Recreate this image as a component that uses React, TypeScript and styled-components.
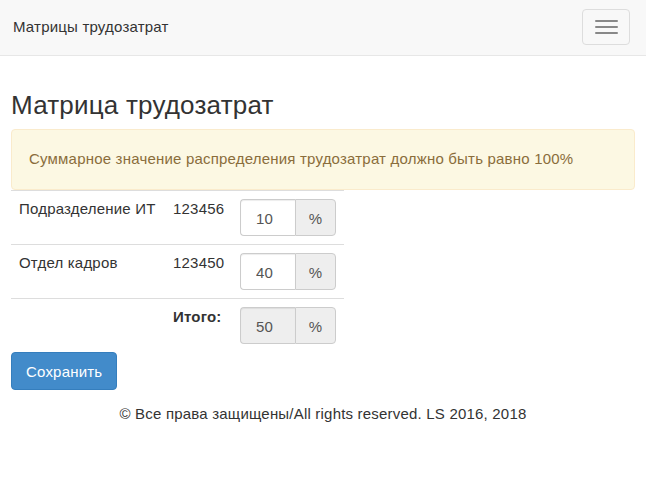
import React from "react";
import styled, { createGlobalStyle } from "styled-components";

const Global = createGlobalStyle`
  html, body { margin: 0; padding: 0; background: #fff; }
  body {
    font-family: "Liberation Sans", Arial, Helvetica, sans-serif;
    font-size: 15px;
    letter-spacing: 0.2px;
    line-height: 20px;
    color: #333;
  }
  * { box-sizing: border-box; }
`;

const Navbar = styled.nav`
  height: 56px;
  background: #f8f8f8;
  border-bottom: 1px solid #e7e7e7;
  display: flex;
  align-items: center;
  justify-content: space-between;
  padding: 0 16px 0 13px;
`;

const Brand = styled.a`
  font-size: 15px;
  color: #333;
  text-decoration: none;
  margin-top: -1px;
`;

const Toggle = styled.button`
  width: 48px;
  height: 36px;
  margin-top: -1px;
  border: 1px solid #ddd;
  border-radius: 4px;
  background: transparent;
  display: flex;
  flex-direction: column;
  align-items: center;
  justify-content: center;
  gap: 4px;
  padding: 0;
`;

const Bar = styled.span`
  display: block;
  width: 23px;
  height: 2px;
  border-radius: 1px;
  background: #888;
`;

const Container = styled.main`
  padding: 0 11px;
`;

const Title = styled.h2`
  font-size: 26px;
  letter-spacing: 0.2px;
  font-weight: 500;
  line-height: 28px;
  margin: 35px 0 10px;
  color: #333;
`;

const Alert = styled.div`
  background: #fcf8e3;
  border: 1px solid #faebcc;
  border-radius: 4px;
  color: #8a6d3b;
  padding: 19px 17px 20px;
  line-height: 20px;
`;

const Table = styled.table`
  border-collapse: collapse;
  width: 333px;
  table-layout: fixed;
`;

const Row = styled.tr``;

const Cell = styled.td<{ $w: number; $bold?: boolean }>`
  width: ${(p) => p.$w}px;
  padding: 8px;
  vertical-align: top;
  border-top: 1px solid #ddd;
  font-weight: ${(p) => (p.$bold ? 700 : 400)};
  white-space: nowrap;
`;

const InputGroup = styled.div`
  display: flex;
  width: 96px;
  height: 37px;
`;

const Input = styled.input<{ $disabled?: boolean }>`
  width: 55px;
  height: 37px;
  border: 1px solid #ccc;
  border-right: none;
  border-radius: 4px 0 0 4px;
  padding: 2px 0 0 15px;
  font-family: inherit;
  font-size: 15px;
  letter-spacing: 0.2px;
  color: #555;
  background: ${(p) => (p.$disabled ? "#eee" : "#fff")};
  box-shadow: inset 0 1px 1px rgba(0, 0, 0, 0.075);
  outline: none;
`;

const Addon = styled.span`
  width: 41px;
  height: 37px;
  border: 1px solid #ccc;
  border-radius: 0 4px 4px 0;
  background: #eee;
  color: #555;
  display: flex;
  align-items: center;
  justify-content: center;
  padding-top: 2px;
`;

const Button = styled.button`
  height: 38px;
  padding: 0 14px;
  font-family: inherit;
  font-size: 15px;
  letter-spacing: 0.2px;
  color: #fff;
  background: #428bca;
  border: 1px solid #357ebd;
  border-radius: 4px;
`;

const Footer = styled.footer`
  text-align: center;
  margin-top: 14px;
  line-height: 20px;
  color: #333;
`;

const rows = [
  { name: "Подразделение ИТ", code: "123456", value: "10" },
  { name: "Отдел кадров", code: "123450", value: "40" },
];

export default function App() {
  return (
    <>
      <Global />
      <Navbar>
        <Brand href="#">Матрицы трудозатрат</Brand>
        <Toggle aria-label="menu">
          <Bar />
          <Bar />
          <Bar />
        </Toggle>
      </Navbar>
      <Container>
        <Title>Матрица трудозатрат</Title>
        <Alert>Суммарное значение распределения трудозатрат должно быть равно 100%</Alert>
        <Table>
          <tbody>
            {rows.map((r) => (
              <Row key={r.code}>
                <Cell $w={154}>{r.name}</Cell>
                <Cell $w={67}>{r.code}</Cell>
                <Cell $w={112}>
                  <InputGroup>
                    <Input defaultValue={r.value} />
                    <Addon>%</Addon>
                  </InputGroup>
                </Cell>
              </Row>
            ))}
            <Row>
              <Cell $w={154}></Cell>
              <Cell $w={67} $bold>
                Итого:
              </Cell>
              <Cell $w={112}>
                <InputGroup>
                  <Input $disabled disabled value="50" readOnly />
                  <Addon>%</Addon>
                </InputGroup>
              </Cell>
            </Row>
          </tbody>
        </Table>
        <Button>Сохранить</Button>
        <Footer>© Все права защищены/All rights reserved. LS 2016, 2018</Footer>
      </Container>
    </>
  );
}
